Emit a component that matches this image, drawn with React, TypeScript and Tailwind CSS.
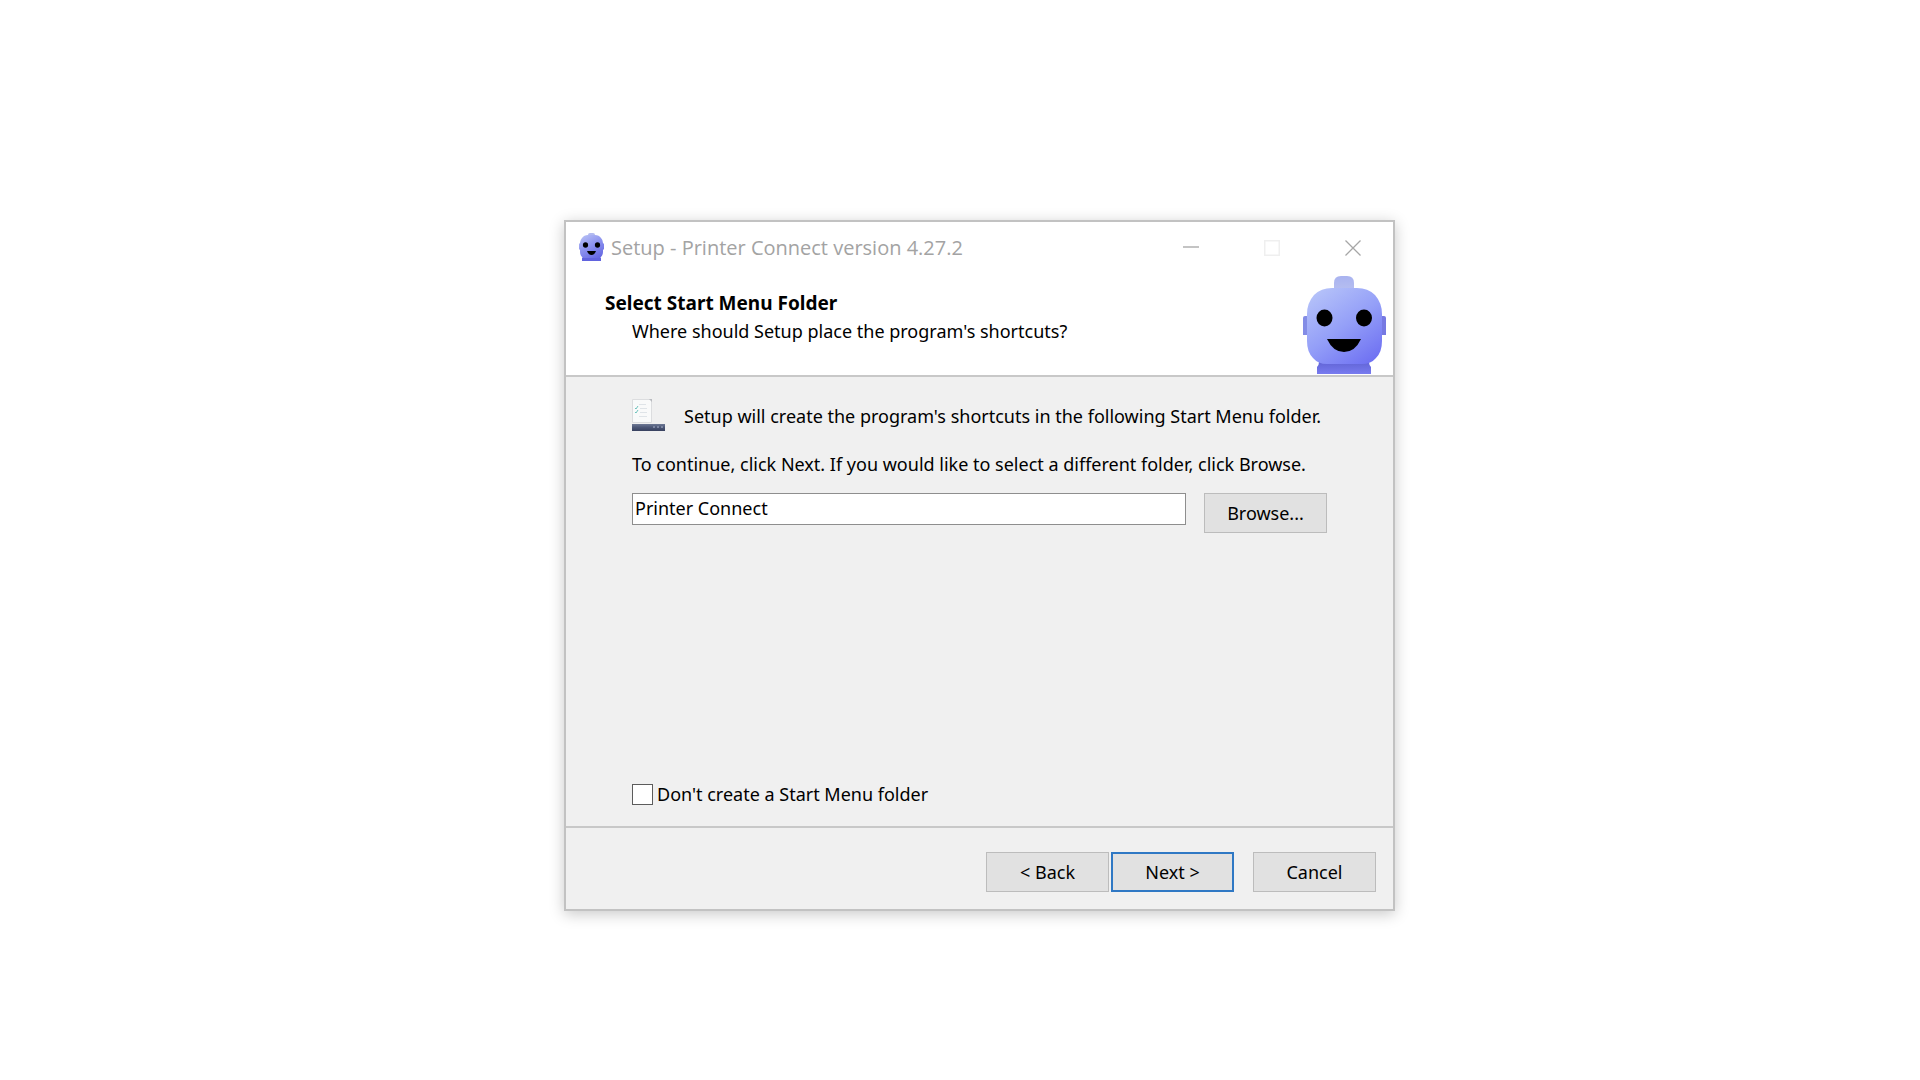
import { useState } from "react";

const buttonBase =
  "flex h-10 w-[123px] items-center justify-center bg-[#e1e1e1] text-[18px] leading-6 text-black";

function Robot() {
  return (
    <svg viewBox="0 0 83 98" className="mt-0.5 h-[98px] w-[83px] shrink-0" aria-hidden="true">
      <defs>
        <linearGradient id="head" x1="0.15" y1="0" x2="0.85" y2="1">
          <stop offset="0" stopColor="#b6c3f9" />
          <stop offset="0.5" stopColor="#949ff8" />
          <stop offset="1" stopColor="#6e70f2" />
        </linearGradient>
        <linearGradient id="cap" x1="0" y1="0" x2="0" y2="1">
          <stop offset="0" stopColor="#a9b3f0" />
          <stop offset="1" stopColor="#b6bef0" />
        </linearGradient>
        <linearGradient id="neck" x1="0" y1="0" x2="0" y2="1">
          <stop offset="0" stopColor="#6265d6" />
          <stop offset="1" stopColor="#787bf0" />
        </linearGradient>
      </defs>
      <path d="M31 14V7q0-7 7-7h6q7 0 7 7v7z" fill="url(#cap)" />
      <path d="M5 40H2q-2 0-2 2v17h5z" fill="#838ce6" />
      <path d="M78 40h3q2 0 2 2v17h-5z" fill="#7679e2" />
      <path d="M16 86h50q0 3 2 5v7H14v-7q2-2 2-5z" fill="url(#neck)" />
      <path
        d="M29 12h25q11 0 18 7 7 8 7 19v27q0 11-6 17-5 6-14 6H24q-9 0-14-6-6-6-6-17V38q0-11 7-19 7-7 18-7z"
        fill="url(#head)"
      />
      <ellipse cx="21.5" cy="42" rx="8" ry="8.5" />
      <ellipse cx="61" cy="42" rx="8" ry="8.5" />
      <path d="M24 63h34q-6 13-17 13T24 63z" />
    </svg>
  );
}

function AppIcon() {
  return (
    <svg viewBox="0 0 25 28" className="mb-0.5 h-7 w-[25px] shrink-0" aria-hidden="true">
      <defs>
        <linearGradient id="icon-head" x1="0.2" y1="0" x2="0.8" y2="1">
          <stop offset="0" stopColor="#b4bdf5" />
          <stop offset="0.5" stopColor="#8a90ee" />
          <stop offset="1" stopColor="#6567e2" />
        </linearGradient>
      </defs>
      <path d="M9 4V2q0-2 2-2h3q2 0 2 2v2z" fill="#b2baf0" />
      <path d="M4 21h17v3l1 1v3H3v-3l1-1z" fill="#6163de" />
      <path
        d="M9 2h7q4 0 6 3 2 2 2 5l1 1v5l-1 1v2q0 3-2 5-1 1-3 1H6q-2 0-3-1-2-2-2-5v-2l-1-1v-5l1-1q0-3 2-5 2-3 6-3z"
        fill="url(#icon-head)"
      />
      <ellipse cx="6.5" cy="12" rx="2.600" ry="2.800" />
      <ellipse cx="18.500" cy="12" rx="2.600" ry="2.800" />
      <path d="M8 18h9q-1.500 4-4.500 4T8 18z" />
    </svg>
  );
}

function FolderIcon() {
  return (
    <svg viewBox="0 0 33 33" className="h-[33px] w-[33px] shrink-0" aria-hidden="true">
      <defs>
        <linearGradient id="bar" x1="0" y1="0" x2="0" y2="1">
          <stop offset="0" stopColor="#6d7894" />
          <stop offset="0.5" stopColor="#4b5675" />
          <stop offset="1" stopColor="#38415f" />
        </linearGradient>
      </defs>
      <path d="M.5.5h19v23H.5z" fill="#f9fafa" stroke="#dcdddf" />
      <path d="M17 0h3v3z" fill="#b9bbc0" />
      <path d="M7 5.500h7M8 9.500h7M8 13.500h7M7 17.500h8" stroke="#dfe4e8" />
      <path d="m3 9 1 1 2-3M3 13l1 1 2-3" fill="none" stroke="#6fc3bd" />
      <path d="M0 25h33v7H0z" fill="url(#bar)" />
      <path d="M21 27h2v2h-2zM25 27h2v2h-2zM29 27h2v2h-2z" fill="#7c86a2" />
    </svg>
  );
}

function TitleBar() {
  return (
    <div className="flex h-[52px] items-center bg-white pl-[13px]">
      <AppIcon />
      <h1 className="ml-[7px] flex-1 truncate font-['Open_Sans',sans-serif] text-[20px] leading-7 text-[#a3a3a3]">
        Setup - Printer Connect version 4.27.2
      </h1>
      <button type="button" aria-label="Minimize" className="flex h-full w-[81px] items-center justify-center">
        <svg viewBox="0 0 16 16" className="h-4 w-4" stroke="#b0b0b0" strokeWidth="1.500">
          <path d="M0 7h16" />
        </svg>
      </button>
      <button type="button" aria-label="Maximize" disabled className="flex h-full w-[81px] items-center justify-center">
        <svg viewBox="0 0 16 16" className="h-4 w-4" fill="none" stroke="#efefef" strokeWidth="1.500">
          <path d="M.75.75h14.500v14.500H.75z" />
        </svg>
      </button>
      <button type="button" aria-label="Close" className="flex h-full w-[81px] items-center justify-center">
        <svg viewBox="0 0 16 16" className="h-4 w-4" stroke="#a6a6a6" strokeWidth="1.300">
          <path d="m.5.5 15 15M15.500.5l-15 15" />
        </svg>
      </button>
    </div>
  );
}

export default function App() {
  const [folder, setFolder] = useState("Printer Connect");
  const [skipFolder, setSkipFolder] = useState(false);

  return (
    <main className="flex min-h-screen items-center justify-center bg-white pt-[51px] pl-[39px] font-['Noto_Sans',sans-serif] text-[18px] leading-6 text-black">
      <form
        className="w-full max-w-[831px] border-2 border-[#c2c2c2] bg-[#f0f0f0] shadow-[0_3px_14px_rgba(0,0,0,0.22)]"
        onSubmit={(e) => e.preventDefault()}
      >
        <TitleBar />

        {/* Page header */}
        <header className="flex items-end justify-between border-b-2 border-[#c8c8c8] bg-white pr-[7px] pb-px">
          <div className="self-start pt-[15px] pl-[39px]">
            <h2 className="text-[19px] leading-7 font-bold">Select Start Menu Folder</h2>
            <p className="pl-[27px] leading-7">Where should Setup place the program's shortcuts?</p>
          </div>
          <Robot />
        </header>

        {/* Page body */}
        <section className="flex min-h-[449px] flex-col px-[66px] pt-[22px] pb-5">
          <div className="flex items-center gap-[19px]">
            <FolderIcon />
            <p>Setup will create the program's shortcuts in the following Start Menu folder.</p>
          </div>
          <label htmlFor="folder" className="mt-5">
            To continue, click Next. If you would like to select a different folder, click Browse.
          </label>
          <div className="mt-[17px] flex items-start gap-[18px]">
            <input
              id="folder"
              type="text"
              value={folder}
              onChange={(e) => setFolder(e.target.value)}
              className="h-8 min-w-0 flex-1 border border-[#8e8e8e] bg-white px-0.5 pb-0.5 outline-none"
            />
            <button type="button" className={`${buttonBase} border border-[#bcbcbc]`}>
              Browse...
            </button>
          </div>
          <label className="mt-auto flex items-center gap-1 self-start">
            <input
              type="checkbox"
              checked={skipFolder}
              onChange={(e) => setSkipFolder(e.target.checked)}
              className="h-[21px] w-[21px] appearance-none border border-[#5c5c5c] bg-white checked:bg-[#3a3a3a]"
            />
            Don't create a Start Menu folder
          </label>
        </section>

        {/* Wizard buttons */}
        <footer className="flex justify-end border-t-2 border-[#c8c8c8] pt-6 pr-[17px] pb-[17px]">
          <button type="button" className={`${buttonBase} border border-[#bcbcbc]`}>
            &lt; Back
          </button>
          <button type="submit" className={`${buttonBase} ml-0.5 border-2 border-[#2f78c4]`}>
            Next &gt;
          </button>
          <button type="button" className={`${buttonBase} ml-[19px] border border-[#bcbcbc]`}>
            Cancel
          </button>
        </footer>
      </form>
    </main>
  );
}
